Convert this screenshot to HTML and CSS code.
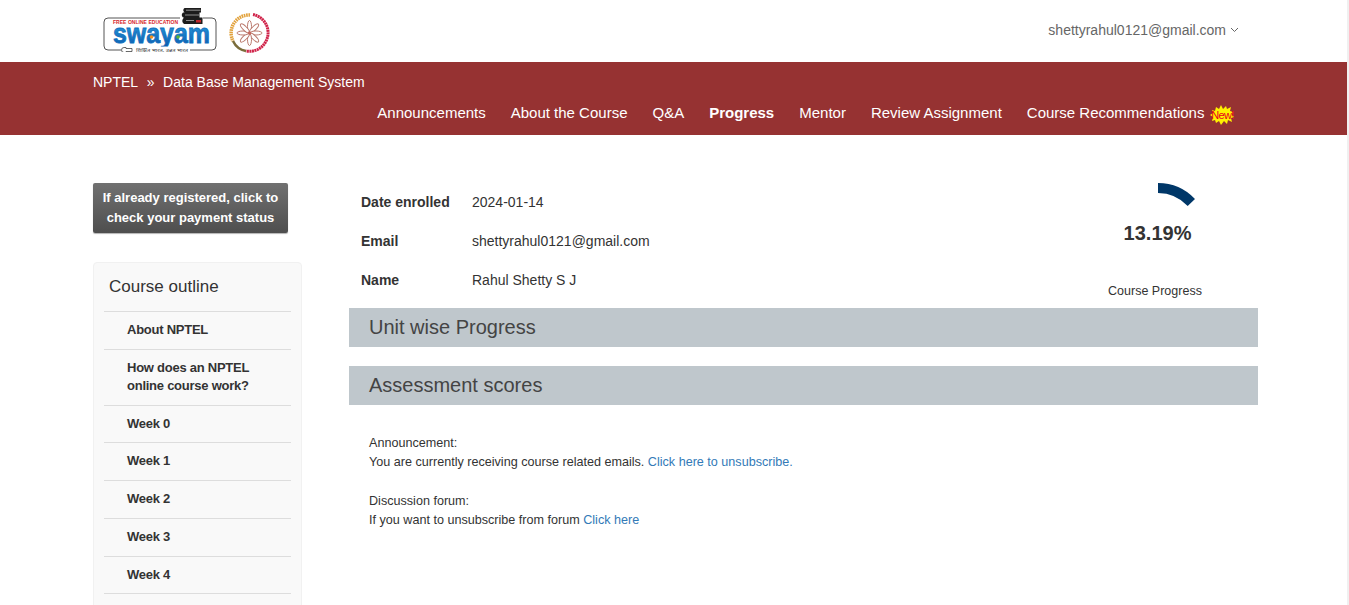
FILE: index.html
```html
<!DOCTYPE html>
<html lang="en">
<head>
<meta charset="utf-8">
<title>Data Base Management System - Progress</title>
<link rel="stylesheet" href="styles.css">
</head>
<body>
<div class="page">
  <header class="top">
    <div class="logos">
      <svg class="logo-swayam" width="116" height="46" viewBox="103 6 116 46">
        <defs>
          <linearGradient id="swgrad" x1="0" y1="0" x2="0" y2="1">
            <stop offset="0" stop-color="#2ba6e6"/>
            <stop offset="1" stop-color="#0a58ab"/>
          </linearGradient>
          <clipPath id="swclip"><rect x="103" y="24" width="116" height="22.500"/></clipPath>
        </defs>
        <path d="M203 18H212a4 4 0 0 1 4 4V46a4 4 0 0 1-4 4H190M121 50H108a4 4 0 0 1-4-4V22a4 4 0 0 1 4-4H180" fill="none" stroke="#555" stroke-width="1"/>
        <text x="113" y="23.500" class="sw-free" textLength="65" lengthAdjust="spacing">FREE ONLINE EDUCATION</text>
        <g clip-path="url(#swclip)">
          <text x="113" y="42.500" class="sw-name" textLength="97" lengthAdjust="spacingAndGlyphs">swayam</text>
        </g>
        <circle cx="151.500" cy="37" r="1.800" fill="#f09020"/>
        <circle cx="178" cy="37" r="1.800" fill="#5cb531"/>
        <path d="M126 47.500h-2a2.500 2.500 0 0 0 0 5h2v-1h6v-3h-6z" fill="#fff" stroke="#444" stroke-width=".8"/>
        <text x="136" y="52" class="sw-tag" textLength="52" lengthAdjust="spacingAndGlyphs">शिक्षित भारत, उन्नत भारत</text>
        <path d="M184.500 8H201V12.500H184.500Q182 10 184.500 8ZM183 12.500H199.500V17.500H183Q180.500 15 183 12.500ZM184 17.500H202.500V24H184Q180.500 21 184 17.500Z" fill="#1d1d1d"/>
        <path d="M186 10.200H200.500M185 15H199M186 20.500H194" stroke="#ddd" stroke-width=".6"/>
        <rect x="196" y="20" width="5" height="2.500" fill="#c0272d"/>
      </svg>
      <svg class="logo-seal" width="42" height="42" viewBox="228 12 42 42">
        <path d="M250 15A18 18 0 0 0 233 41" fill="none" stroke="#e2a23c" stroke-width="3.500" stroke-dasharray="1.600 .7"/>
        <path d="M253 14.500A18.500 18.500 0 0 1 246 51" fill="none" stroke="#d0244a" stroke-width="3" stroke-dasharray="2 .5"/>
        <path d="M233 41A18 18 0 0 0 246 51" fill="none" stroke="#7a6c3a" stroke-width="2.500"/>
        <g fill="#fff" stroke="#bb7a6e" stroke-width="1">
          <ellipse cx="249.500" cy="26.500" rx="2" ry="6"/>
          <ellipse cx="249.500" cy="26.500" rx="2" ry="6" transform="rotate(45 249.500 33)"/>
          <ellipse cx="249.500" cy="26.500" rx="2" ry="6" transform="rotate(90 249.500 33)"/>
          <ellipse cx="249.500" cy="26.500" rx="2" ry="6" transform="rotate(135 249.500 33)"/>
          <ellipse cx="249.500" cy="26.500" rx="2" ry="6" transform="rotate(180 249.500 33)"/>
          <ellipse cx="249.500" cy="26.500" rx="2" ry="6" transform="rotate(225 249.500 33)"/>
          <ellipse cx="249.500" cy="26.500" rx="2" ry="6" transform="rotate(270 249.500 33)"/>
          <ellipse cx="249.500" cy="26.500" rx="2" ry="6" transform="rotate(315 249.500 33)"/>
        </g>
        <circle cx="249.500" cy="33" r="1.800" fill="#c46a60"/>
      </svg>
    </div>
    <div class="user">
      <span>shettyrahul0121@gmail.com</span>
      <svg class="chev" width="9" height="6" viewBox="0 0 9 6"><path d="M1 1l3.500 3.500L8 1" fill="none" stroke="#666" stroke-width="1"/></svg>
    </div>
  </header>

  <div class="band">
    <div class="crumbs"><span>NPTEL</span><span>»</span><span>Data Base Management System</span></div>
    <nav class="nav">
      <a>Announcements</a>
      <a>About the Course</a>
      <a>Q&amp;A</a>
      <a class="active">Progress</a>
      <a>Mentor</a>
      <a>Review Assignment</a>
      <a class="with-badge">Course Recommendations
        <span class="badge">
          <svg width="24" height="20" viewBox="0 0 24 20"><polygon points="0,10 3,8 2,5 5,6 6,2 9,4 11,0 13,4 16,1 17,4 21,2 20,6 23,7 22,10 24,12 21,13 22,17 18,15 17,19 14,16 11,20 9,16 6,18 5,15 2,16 3,12" fill="#fff200"/></svg>
          <span class="badge-text">New!</span>
        </span>
      </a>
    </nav>
  </div>

  <div class="content">
    <aside class="side">
      <a class="pay">If already registered, click to check your payment status</a>
      <div class="outline">
        <h2 class="outline-title">Course outline</h2>
        <ul class="outline-list">
          <li>About NPTEL</li>
          <li>How does an NPTEL online course work?</li>
          <li>Week 0</li>
          <li>Week 1</li>
          <li>Week 2</li>
          <li>Week 3</li>
          <li>Week 4</li>
        </ul>
      </div>
    </aside>

    <main class="main">
      <div class="summary">
        <dl class="facts">
          <div class="fact"><dt>Date enrolled</dt><dd>2024-01-14</dd></div>
          <div class="fact"><dt>Email</dt><dd>shettyrahul0121@gmail.com</dd></div>
          <div class="fact"><dt>Name</dt><dd>Rahul Shetty S J</dd></div>
        </dl>
        <div class="gauge">
          <svg class="arc" width="40" height="26" viewBox="1157 182 40 26"><path d="M1158 183A51 51 0 0 1 1195 199L1187.700 206A41 41 0 0 0 1158 193Z" fill="#003768"/></svg>
          <div class="pct">13.19%</div>
          <div class="gauge-label">Course Progress</div>
        </div>
      </div>
      <h3 class="bar bar-first">Unit wise Progress</h3>
      <h3 class="bar">Assessment scores</h3>
      <div class="notes">
        <p>Announcement:<br>You are currently receiving course related emails. <a>Click here to unsubscribe.</a></p>
        <p>Discussion forum:<br>If you want to unsubscribe from forum <a>Click here</a></p>
      </div>
    </main>
  </div>
</div>
</body>
</html>
```
FILE: styles.css
```css
* { box-sizing: border-box; }
html, body { margin: 0; height: 605px; overflow: hidden; background: #f0f0f0; }
body { font-family: "Liberation Sans", Arial, sans-serif; font-size: 14px; color: #333; }
.page { width: 1347px; height: 605px; overflow: hidden; background: #fff; }

.top { height: 62px; display: flex; justify-content: space-between; align-items: center; padding: 0 108px 0 103px; }
.logos { display: flex; align-items: center; gap: 9px; }
.logo-swayam { margin-top: -4px; }
.logo-seal { margin-top: 4px; }
.sw-free { font: bold 5px "Liberation Sans", sans-serif; fill: #d6262b; }
.sw-name { font: bold 28px "Liberation Sans", sans-serif; fill: url(#swgrad); stroke: #0f6fbd; stroke-width: .8px; }
.sw-tag { font: 5px "Noto Sans", "DejaVu Sans", sans-serif; fill: #444; }
.user { display: flex; align-items: center; gap: 4px; color: #666; font-size: 14px; margin-top: -2px; }

.band { height: 73px; background: #963232; color: #fff; padding: 11px 89px 0 93px; }
.crumbs { display: flex; gap: 8.600px; font-size: 14px; line-height: 18px; }
.nav { display: flex; justify-content: flex-end; gap: 25px; font-size: 15px; line-height: 18px; margin-top: 13px; padding-right: 53.600px; }
.nav .active { font-weight: bold; }
.with-badge { position: relative; }
.badge { position: absolute; left: 100%; top: 1px; margin-left: 6px; width: 24px; height: 20px; display: flex; align-items: center; justify-content: center; }
.badge svg { display: block; position: absolute; left: 0; top: 0; }
.badge-text { position: relative; font-size: 11px; line-height: 20px; letter-spacing: -.7px; color: #e8001c; }

.content { display: flex; padding: 48px 89px 0 93px; }
.side { width: 209px; flex: none; }
.pay { display: block; width: 195px; height: 50px; padding: 5px 5px; text-align: center; color: #fff; font-weight: bold; font-size: 13px; line-height: 20px; border-radius: 2px; background: linear-gradient(#717171, #4e4e4e); box-shadow: 0 1px 1px rgba(0,0,0,.3); }
.outline { margin-top: 29px; min-height: 420px; background: #f9f9f9; border: 1px solid #f1f1f1; border-radius: 4px; padding: 0 10px; }
.outline-title { margin: 0; padding: 14px 5px; font-size: 17px; line-height: 20px; font-weight: normal; color: #333; border-bottom: 1px solid #ddd; }
.outline-list { list-style: none; margin: 0; padding: 0; }
.outline-list li { padding: 9.100px 30px 9.700px 23px; font-weight: bold; font-size: 13px; letter-spacing: -.25px; line-height: 18px; border-bottom: 1px solid #ddd; }

.main { margin-left: 47px; flex: 1; min-width: 0; }
.summary { display: flex; justify-content: space-between; height: 125px; }
.facts { margin: -1px 0 0; padding: 0 0 0 12px; }
.fact { display: flex; height: 39px; align-items: center; }
.fact dt { width: 111px; font-weight: bold; }
.fact dd { margin: 0; }
.gauge { width: 180px; margin-right: 13px; display: flex; flex-direction: column; align-items: center; }
.arc { display: block; margin-left: 44px; margin-top: -1px; flex: none; }
.pct { margin-top: 12px; font-size: 20px; font-weight: bold; line-height: 26px; color: #333; margin-left: 5px; }
.gauge-label { margin-top: 37px; font-size: 12.500px; line-height: 16px; color: #333; }
.bar { margin: 19px 0 0; height: 39px; padding-left: 20px; background: #bfc7cc; color: #444; font-size: 20px; line-height: 39px; font-weight: normal; }
.bar-first { margin-top: 0; }
.notes { padding: 29px 20px 0; font-size: 12.600px; line-height: 19px; }
.notes p { margin: 0 0 20px; }
.notes a { color: #337ab7; }
```
